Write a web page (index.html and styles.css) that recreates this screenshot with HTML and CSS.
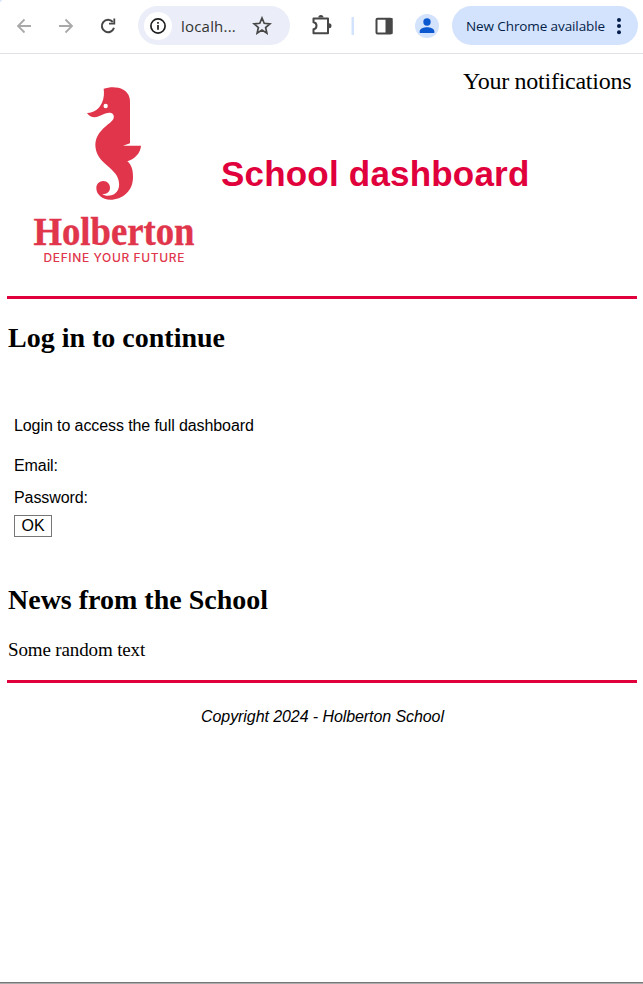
FILE: index.html
```html
<!DOCTYPE html>
<html lang="en">
<head>
<meta charset="utf-8">
<title>School dashboard</title>
<link rel="stylesheet" href="styles.css">
</head>
<body>
<div class="toolbar">
  <svg class="nav-icons" width="138" height="52" viewBox="0 0 138 52" fill="none">
    <path d="M0 0H2.5Q.8.6 0 2.5Z" fill="#d3e2fd"/>
    <g stroke="#a9a9a9" stroke-width="1.8"><path d="M31 26H18.5M24.5 19.5L18 26L24.5 32.500"/><path d="M59 26H71.500M65.500 19.500L72 26L65.500 32.500"/></g>
    <path d="M112.800 22A6.200 6.200 0 1 0 114 27.800" stroke="#474747" stroke-width="2"/>
    <path d="M115.200 18.500V24.600H109V22.800H113.400V18.500Z" fill="#474747"/>
  </svg>
  <div class="address">
    <span class="site-info"><svg width="18" height="18" viewBox="0 0 18 18" fill="none"><circle cx="9" cy="9" r="7.100" stroke="#1f1f1f" stroke-width="1.700"/><path d="M9 8.100V12.700M9 5V6.800" stroke="#1f1f1f" stroke-width="1.700"/></svg></span>
    <span class="url">localh...</span>
    <svg width="20" height="20" viewBox="0 0 20 20" fill="none" stroke="#474747" stroke-width="1.700"><path d="M10 2L12.200 7.300L17.900 7.800L13.600 11.500L14.900 17.100L10 14.100L5.100 17.100L6.400 11.500L2.100 7.800L7.800 7.300Z"/></svg>
  </div>
  <svg class="tool-icons" width="162" height="52" viewBox="0 0 162 52" fill="none">
    <path d="M23.500 18.400H38V33.300H23.500V29.300C27.500 28.900 27.500 22.600 23.500 22.200Z" stroke="#474747" stroke-width="2" stroke-linejoin="round"/>
    <path d="M28.300 17.600A2.600 2.600 0 0 1 33.500 17.600ZM39 23.300A2.500 2.500 0 0 1 39 28.300Z" fill="#474747"/>
    <path d="M61.500 17H64V35H61.500Z" fill="#d3e3fd"/>
    <rect x="86.500" y="18.800" width="15" height="14.600" rx="1" stroke="#474747" stroke-width="2"/><path d="M95.500 18H102.500V34H95.500Z" fill="#474747"/>
    <circle cx="137" cy="26" r="12" fill="#d3e3fd"/><circle cx="137" cy="22" r="3.700" fill="#0b57d0"/><path d="M129.700 33V31.200C129.700 28.500 134 27.300 137 27.300S144.300 28.500 144.300 31.200V33Z" fill="#0b57d0"/>
  </svg>
  <div class="update"><span class="update-label">New Chrome available</span>
    <svg width="6" height="20" viewBox="0 0 6 20" fill="#041e49"><circle cx="3" cy="4" r="2"/><circle cx="3" cy="10" r="2"/><circle cx="3" cy="16.300" r="2"/></svg>
  </div>
</div>
<header class="header">
  <svg class="logo" width="170" height="190" viewBox="30 80 170 190" fill="#e0354b">
    <g transform="translate(70 75) scale(.33333)">
      <path d="M101 41C119 35 143 34 160 44C174 52 180 65 180 79V205L159 212H213C212 233 195 252 172 259C184 269 189 284 189 305C190 348 157 374 121 374C97 374 79 359 79 339C79 327 88 318 100 318C112 318 120 327 120 338C120 350 111 357 97 357C103 363 116 364 127 360C142 354 149 339 147 323C145 302 132 290 113 273C90 254 77 237 76 211C76 183 94 165 114 148C127 138 135 130 130 119C124 109 106 114 95 120C82 127 63 132 51 114C75 113 89 98 96 83C102 69 103 55 101 41Z"/>
      <circle cx="107" cy="93" r="6.500" fill="#fff"/>
    </g>
    <text class="brand" x="33.500" y="245" textLength="161" lengthAdjust="spacingAndGlyphs">Holberton</text>
    <text class="motto" x="43.500" y="262" textLength="141.500" lengthAdjust="spacingAndGlyphs">DEFINE YOUR FUTURE</text>
  </svg>
  <h1 class="title">School dashboard</h1>
  <div class="notifications">Your notifications</div>
</header>
<main class="content">
  <h2 class="heading">Log in to continue</h2>
  <form class="login">
    <p class="intro">Login to access the full dashboard</p>
    <label class="field">Email:</label>
    <label class="field">Password:</label>
    <button class="ok" type="button">OK</button>
  </form>
  <h2 class="heading">News from the School</h2>
  <p class="news">Some random text</p>
</main>
<footer class="footer">Copyright 2024 - Holberton School</footer>
</body>
</html>
```
FILE: styles.css
```css
* { box-sizing: border-box; }
body {
  margin: 0;
  height: 984px;
  display: flex;
  flex-direction: column;
  background: linear-gradient(#777 50%, #ababab 50%) bottom / 100% 2px no-repeat #fff;
  color: #000;
  font-family: "Liberation Serif", serif;
}
h1, h2, p { margin: 0; }
svg { flex: none; display: block; }
.toolbar {
  height: 54px;
  display: flex;
  align-items: flex-start;
  border-bottom: 1px solid #dfe1e5;
  font-family: "Open Sans", sans-serif;
  white-space: nowrap;
}
.address {
  width: 152px;
  height: 39px;
  margin-top: 6px;
  padding: 0 18px 0 6px;
  display: flex;
  align-items: center;
  border-radius: 20px;
  background: #ebeef8;
}
.site-info {
  width: 28px;
  height: 28px;
  display: grid;
  place-items: center;
  border-radius: 50%;
  background: #fff;
}
.url { width: 80px; flex: none; padding-left: 9px; font-size: 15px; letter-spacing: .2px; color: #333; }
.update {
  width: 186px;
  height: 39px;
  margin-top: 6px;
  padding: 0 16px 0 14px;
  display: flex;
  align-items: center;
  justify-content: space-between;
  border-radius: 20px;
  background: #d3e3fd;
  color: #041e49;
  font-size: 13.500px;
  letter-spacing: -.1px;
}
.header {
  height: 245px;
  margin: 0 6px 0 7px;
  padding: 26px 5px 0 23px;
  display: flex;
  border-bottom: 3px solid #e0003c;
}
.logo { overflow: visible; }
.brand { font: bold 39px "Liberation Serif", serif; stroke: #e0354b; stroke-width: .4px; }
.motto { font: 500 11.500px Inter, sans-serif; letter-spacing: .6px; }
.title {
  flex: 1;
  padding: 74px 0 0 21px;
  font: bold 35px/40px "Liberation Sans", sans-serif;
  letter-spacing: .2px;
  color: #e0003c;
  white-space: nowrap;
}
.notifications {
  width: 169px;
  margin: -13px 0 0 -169px;
  font-size: 24px;
  letter-spacing: -.26px;
  line-height: 28px;
  white-space: nowrap;
}
.content {
  height: 384px;
  margin: 0 6px 0 7px;
  padding-top: 22px;
  border-bottom: 3px solid #e0003c;
}
.heading { padding-left: 1px; font-size: 28px; line-height: 34px; }
.login {
  height: 228px;
  padding: 61px 0 0 7px;
  font: 16px/20px "Liberation Sans", sans-serif;
  letter-spacing: -.09px;
}
.intro { margin-bottom: 20px; }
.field { display: block; margin-bottom: 12px; }
.ok {
  display: block;
  width: 38px;
  height: 22px;
  margin-top: -5px;
  padding: 0;
  border: 1px solid #767676;
  background: #fff;
  color: #000;
  font: 16px/20px "Liberation Sans", sans-serif;
}
.news { padding: 22px 0 0 1px; font-size: 19px; line-height: 22px; letter-spacing: -.14px; }
.footer {
  padding: 24px 0 0 2px;
  font: italic 16px/20px "Liberation Sans", sans-serif;
  letter-spacing: -.08px;
  text-align: center;
}
```
